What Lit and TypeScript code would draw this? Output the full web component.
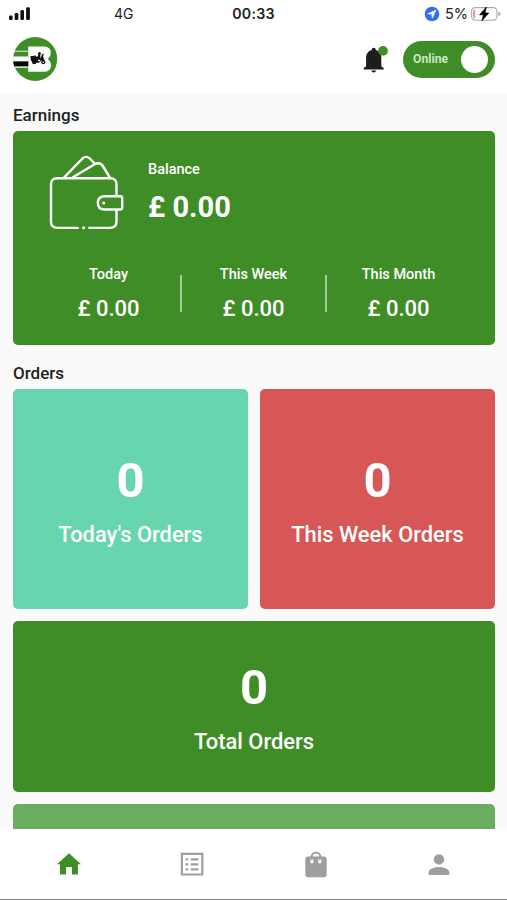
import { LitElement, html, css, svg } from "lit";
import { customElement } from "lit/decorators.js";

interface Stat { label: string; value: string }

const periods: Stat[] = [
  { label: "Today", value: "£ 0.00" },
  { label: "This Week", value: "£ 0.00" },
  { label: "This Month", value: "£ 0.00" },
];

const signal = html`<svg width="24" height="16" viewBox="8 5 24 16" fill="#111">
  <rect x="9" y="14.5" width="3.6" height="4.6" rx="1.3" />
  <rect x="14.7" y="12" width="3.6" height="7.1" rx="1.3" />
  <rect x="20.4" y="9" width="3.6" height="10.1" rx="1.3" />
  <rect x="26.1" y="6.2" width="3.8" height="12.9" rx="1.3" />
</svg>`;

const location = html`<svg width="16" height="16" viewBox="0 0 16 16">
  <circle cx="8" cy="8" r="7.3" fill="#2f6fe8" />
  <path d="M12 4 3.8 7.8 7.8 8.3 8.3 12.2Z" fill="#fff" stroke="#fff" stroke-width=".6" stroke-linejoin="round" />
</svg>`;

const battery = html`<svg width="32" height="18" viewBox="470 4 32 18">
  <rect x="471.6" y="6.6" width="25.4" height="12.6" rx="3.6" fill="#fff" stroke="#aaa" stroke-width="1.1" />
  <path d="M475.2 8.4V17.4H474.6Q473 17.2 473 15.5V10.3Q473 8.6 474.6 8.4Z" fill="#ee9c98" />
  <path d="M498.4 10.8Q500.6 11.4 500.6 13T498.4 15.2Z" fill="#aaa" />
  <path d="M486.4 6 479.6 13.8H483.4L481.9 19.8 488.8 12H485Z" fill="#000" stroke="#000" stroke-width=".7" stroke-linejoin="round" />
</svg>`;

const logo = html`<svg width="46" height="46" viewBox="12 36 46 46">
  <circle cx="35.2" cy="59" r="22" fill="#3f8d26" />
  <path d="M28.2 46.4H43.6C48.4 46.4 50.8 48.8 50.8 52.6 50.8 55.6 49.8 57.4 47.6 59 50 60.6 51 62.4 51 65.2 51 69.4 48.4 71.8 43.8 71.8H28.2Z" fill="#fff" />
  <path d="M14.3 50.7H28.3V51.8H14Z" fill="#fff" opacity=".85" />
  <path d="M13.2 56.4H28.3V61.6H13.1Z" fill="#fff" />
  <path d="M13.2 61.6H28.3V66.4H14.2Z" fill="#080808" />
  <path d="M14.3 66.4H28.3V67.8H14.9Z" fill="#fff" />
  <g fill="#111">
    <path d="M30.3 56.2 35.6 55.4 36.8 57.2 38.4 55 37.8 53.4 39.6 51.8 41 53 40.2 55.4 40.5 58.4 42 54.2 43.6 53.6 43.2 57 44.4 60 45.6 62.4H42.4L41.4 60.6 39 62.8H33.4L31 60.8Z" />
    <circle cx="34.2" cy="62" r="2.2" /><circle cx="43.2" cy="62.2" r="2" />
  </g>
  <circle cx="43.2" cy="62.3" r=".8" fill="#fff" /><path d="M38.3 59.8 40.5 59.8 39.7 61.2H38Z" fill="#fff" />
</svg>`;

const bell = html`<svg width="30" height="32" viewBox="360 42 30 32">
  <path d="M373.7 46.7C375 46.7 375.7 47.6 375.7 48.9 379.4 49.9 381.3 53 381.3 56.8V65.2L383.8 67.2V68.4H363.6V67.2L366.1 65.2V56.8C366.1 53 368 49.9 371.7 48.9 371.7 47.6 372.4 46.7 373.7 46.7Z" fill="#1d1d1d" />
  <path d="M371.3 69.6H376.1Q375.6 71.5 373.7 71.5T371.3 69.6Z" fill="#1d1d1d" />
  <circle cx="383" cy="49.9" r="4.9" fill="#3f8d26" />
</svg>`;

const wallet = html`<svg class="wallet" width="78" height="78" viewBox="48 154 78 78" fill="none" stroke="#fff" stroke-width="2.4" stroke-linecap="round" stroke-linejoin="round">
  <path d="M77.7 227.9H57.3Q51 227.9 51 221.6V184.6Q51 178.3 57.3 178.3H110.2Q116.5 178.3 116.5 184.6V195.7M116.5 210.2V221.6Q116.5 227.9 110.2 227.9H89.4" />
  <path d="M104 196.3H120.3Q122.2 196.3 122.2 198.2V207.6Q122.2 209.5 120.3 209.5H104Q97.9 209 97.9 202.9T104 196.3Z" />
  <path d="M64.2 177.3 82.5 158.5Q86 155.4 89.6 158.2L94.8 163.8" />
  <path d="M73 177.3 94.6 164.2Q99.8 161.7 102.8 166L109.8 177.3" />
  <circle cx="103.7" cy="202.9" r="1.5" fill="#fff" stroke="none" />
  <circle cx="83.6" cy="227.8" r="1.5" fill="#fff" stroke="none" />
</svg>`;

const navIcons = [
  svg`<path fill="#3f8d26" d="M12 3.2 .1 14.2H3V24.6H9.1V17H14.9V24.6H20.9V14.2H24Z" />`,
  svg`<path fill="#9e9e9e" fill-rule="evenodd" d="M.8 2.8H23.4V25.6H.8ZM3 5V23.4H21.2V5Z" /><path stroke="#9e9e9e" stroke-width="2.2" d="M5.6 9.4H8.2M10.8 9.4H18.4M5.6 14.4H8.2M10.8 14.4H18.4M5.6 19.3H8.2M10.8 19.3H18.4" />`,
  svg`<path fill="none" stroke="#9e9e9e" stroke-width="2" d="M7.7 8V6.8A4.3 4.3 0 0 1 16.3 6.8V8" /><rect x="1.3" y="6.6" width="21.4" height="20.6" rx="2.4" fill="#9e9e9e" /><rect x="6.3" y="8.6" width="3.2" height="4.8" rx="1.6" fill="#fff" /><rect x="14.2" y="8.6" width="3.2" height="4.8" rx="1.6" fill="#fff" /><path fill="none" stroke="#9e9e9e" stroke-width="1.3" d="M7.9 6.5V10.6M15.8 6.5V10.6" />`,
  svg`<circle cx="12" cy="9.4" r="5.2" fill="#9e9e9e" /><path fill="#9e9e9e" d="M1.7 24.9V22.2C1.7 18.6 8.6 17 12 17S22.3 18.6 22.3 22.2V24.9Z" />`,
];

@customElement("app-root")
export class AppRoot extends LitElement {
  static styles = css`
    :host { display: flex; flex-direction: column; height: 900px; overflow: hidden; background: #fafafa; color: #222; font-family: Roboto, sans-serif; font-weight: 500; }
    * { box-sizing: border-box; }
    svg { display: block; flex: none; }
    .top { background: #fff; height: 94px; flex: none; border-bottom: 1px solid #f8f8f8; }
    .status { height: 26px; display: grid; grid-template-columns: 8px 106px 1fr auto; align-items: center; font: 400 15px/26px Inter, sans-serif; }
    .signal { grid-column: 2; }
    .network { font-size: 14px; padding-top: 1px; }
    .power { display: flex; align-items: center; padding-right: 5px; }
    .power svg:first-child { margin-top: 1px; }
    .pct { margin: 1px 2px 0 5px; font-size: 14.5px; }
    .clock { font-weight: 600; font-size: 14.2px; letter-spacing: .3px; padding-top: 1px; }
    .mid { display: flex; justify-content: space-between; padding-right: 149px; }
    .bar { height: 66px; display: flex; align-items: center; padding: 0 12px; }
    .logo { flex: 1; }
    .bell { margin-right: 13px; }
    .toggle { width: 92px; height: 37px; border-radius: 19px; background: #3f8d26; display: flex; align-items: center; justify-content: space-between; padding: 0 7px 0 10px; color: #c9e8bf; font-size: 12.2px; font-weight: 700; }
    .knob { width: 27px; height: 27px; border-radius: 50%; background: #fff; }
    main { flex: 1; min-height: 0; overflow: hidden; padding: 10px 12px 0 13px; }
    h2 { margin: 0; font-size: 17px; line-height: 22px; font-weight: 500; }
    .card { border-radius: 5px; color: #fff; }
    .earnings { margin-top: 5px; height: 214px; background: #3f8d26; padding-top: 23px; }
    .balance { display: flex; padding-left: 35px; height: 109px; }
    .total { margin-left: 22px; padding-top: 6px; }
    .label { font-size: 14.5px; line-height: 20px; }
    .amount { font-size: 29px; line-height: 36px; font-weight: 700; margin-top: 9px; }
    .periods { display: grid; grid-template-columns: 143px 2px 143px 2px 143px; justify-content: center; padding-right: 1px; }
    .period { text-align: center; height: 60px; padding-top: 2px; }
    .value { font-size: 22px; line-height: 28px; margin-top: 10px; }
    .rule { height: 37px; margin-top: 12px; background: #a6cb9a; }
    .orders { margin-top: 17px; }
    .grid { display: grid; grid-template-columns: 1fr 1fr; grid-template-rows: 220px 171px 60px; gap: 12px; margin-top: 5px; }
    .count { display: flex; flex-direction: column; align-items: center; justify-content: center; padding-top: 2px; }
    .num { font-size: 49px; line-height: 58px; font-weight: 700; }
    .name { font-size: 21.9px; line-height: 28px; margin-top: 11px; }
    .mint { background: #67d5ad; }
    .red { background: #d65755; }
    .green { background: #3f8d26; }
    .light { background: #69ae5e; }
    .wide { grid-column: 1 / -1; }
    nav { flex: none; height: 71px; background: #fff; border-bottom: 1px solid #858585; padding: 21px 6px 0 7px; display: grid; grid-template-columns: repeat(4, 1fr); justify-items: center; }
  `;

  private tile(name: string, tone: string) {
    return html`<div class="card count ${tone}"><div class="num">0</div><div class="name">${name}</div></div>`;
  }

  render() {
    return html`
      <header class="top">
        <div class="status">
          <span class="signal">${signal}</span>
          <span class="mid"><span class="network">4G</span><span class="clock">00:33</span></span>
          <span class="power">${location}<span class="pct">5%</span>${battery}</span>
        </div>
        <div class="bar">
          <div class="logo">${logo}</div>
          <div class="bell">${bell}</div>
          <div class="toggle">Online<span class="knob"></span></div>
        </div>
      </header>
      <main>
        <h2>Earnings</h2>
        <section class="card earnings">
          <div class="balance">${wallet}
            <div class="total"><div class="label">Balance</div><div class="amount">£ 0.00</div></div>
          </div>
          <div class="periods">
            ${periods.map((p, i) => html`${i ? html`<div class="rule"></div>` : ""}
              <div class="period"><div class="label">${p.label}</div><div class="value">${p.value}</div></div>`)}
          </div>
        </section>
        <h2 class="orders">Orders</h2>
        <section class="grid">
          ${this.tile("Today's Orders", "mint")}
          ${this.tile("This Week Orders", "red")}
          ${this.tile("Total Orders", "green wide")}
          <div class="card light wide"></div>
        </section>
      </main>
      <nav>${navIcons.map((i) => html`<svg width="24" height="28" viewBox="0 0 24 28">${i}</svg>`)}</nav>
    `;
  }
}
